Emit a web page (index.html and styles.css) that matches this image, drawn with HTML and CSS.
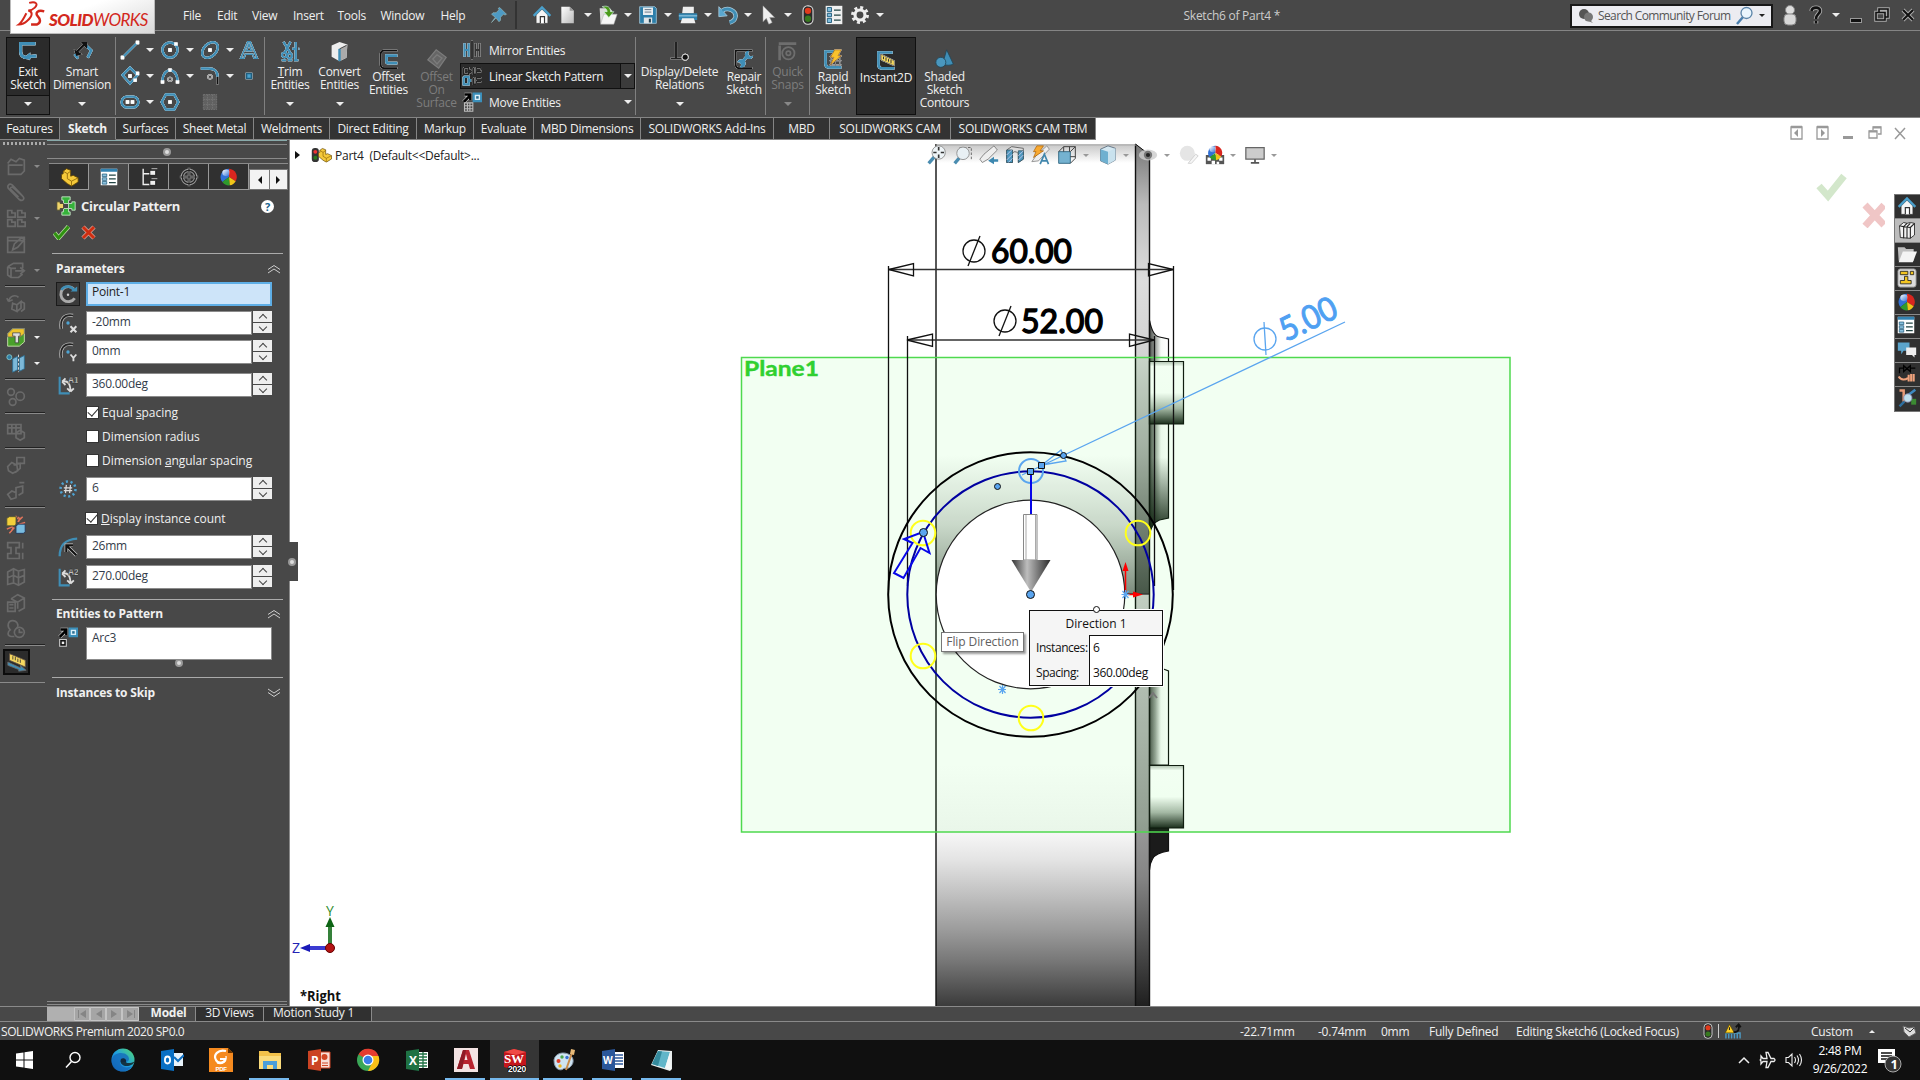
FILE: index.html
```html
<!DOCTYPE html>
<html lang="en">
<head>
<meta charset="utf-8">
<title>SOLIDWORKS Premium 2020 - Sketch6 of Part4</title>
<link rel="stylesheet" href="styles.css">
</head>
<body>
<svg class="defs" aria-hidden="true">
  <defs>
    <linearGradient id="gBall" x1="0" y1="0" x2="1" y2="1"><stop offset="0" stop-color="#fff"/><stop offset="1" stop-color="#fff" stop-opacity="0"/></linearGradient>
    <linearGradient id="gPage" x1="0" y1="0" x2="1" y2="1"><stop offset="0" stop-color="#fff"/><stop offset="1" stop-color="#bbb"/></linearGradient>
    <linearGradient id="gEdge" x1="0" y1="1" x2="1" y2="0"><stop offset="0" stop-color="#0f5fb5"/><stop offset=".5" stop-color="#1f9fe0"/><stop offset="1" stop-color="#55dc6b"/></linearGradient>
    <symbol id="home" viewBox="0 0 24 24"><path d="M5 12v10h14V12l-7-7z" fill="#f4f4f4" stroke="#333" stroke-width=".6"/><path d="M10 22v-8h5v8" fill="#fff" stroke="#333" stroke-width="1.4"/><path d="M2 13L12 3l10 10" fill="none" stroke="#4aa0cc" stroke-width="2.8"/></symbol>
    <symbol id="page" viewBox="0 0 24 24"><path d="M4 2h10l5 5v15H4z" fill="url(#gPage)"/><path d="M14 2l5 5h-5z" fill="#999"/></symbol>
    <symbol id="open" viewBox="0 0 24 24"><path d="M2 4h12l3 3v15H3z" fill="#ddd"/><path d="M7 11h16l-4 12H3z" fill="#f6f6f6" stroke="#aaa" stroke-width=".6"/><path d="M5 2c7-2 10 1 10 6h4l-6 7-6-7h4c0-3-2-4-6-6z" fill="#4c9a1c" stroke="#dfe" stroke-width=".7"/></symbol>
    <symbol id="save" viewBox="0 0 24 24"><path d="M2 2h18l2 2v18H2z" fill="#2d7ea9" stroke="#9fc4d8"/><path d="M6 3h12v9H6z" fill="#e9eef1"/><path d="M8 5.500h8M8 8.500h8" stroke="#567" /><path d="M7 15h10v7H7z" fill="#dfe5e8"/><path d="M13 16.500h2.500V21H13z" fill="#245"/></symbol>
    <symbol id="print" viewBox="0 0 24 24"><path d="M6 2h13v8H5z" fill="#eee"/><path d="M1 10h22v8H1z" fill="#3285b0"/><path d="M1 13h22" stroke="#8fc4de" stroke-width="1.500"/><path d="M5 16h14l2 6H3z" fill="#f1f1f1"/></symbol>
    <symbol id="undo" viewBox="0 0 24 24"><path d="M5 7C12 2 22 7 21 14c-.5 3-3 6-7 7" fill="none" stroke="#a8c8d8" stroke-width="5.500"/><path d="M1 2l10 11-10 1z" fill="#5aa7cf" stroke="#a8c8d8"/><path d="M5 7C12 2 22 7 21 14c-.5 3-3 6-7 7" fill="none" stroke="#3f8eb6" stroke-width="3.600"/></symbol>
    <symbol id="cursor" viewBox="0 0 24 24"><path d="M6 1v19l4-4 3 7 4-2-3-6h6z" fill="#eee" stroke="#999" stroke-width=".6"/></symbol>
    <symbol id="light" viewBox="0 0 24 24"><rect x="6" y="1" width="12" height="22" rx="5.500" fill="#2a2a2a" stroke="#ddd" stroke-width="1.300"/><circle cx="12" cy="7" r="3.800" fill="#e23a1c"/><circle cx="12" cy="16.500" r="3.800" fill="#37791f"/></symbol>
    <symbol id="list" viewBox="0 0 24 24"><path d="M2 1h20v22H2z" fill="#f0f0f0"/><path d="M4 3h5v5H4zM4 10h5v4H4zM4 16h5v5H4z" fill="#7fbddd" stroke="#134f70"/><path d="M12 6h8M12 12h8M12 18h8" stroke="#244" stroke-width="1.500"/></symbol>
    <symbol id="gear" viewBox="0 0 24 24"><circle cx="12" cy="12" r="9" fill="none" stroke="#eee" stroke-width="3.500" stroke-dasharray="3.530 3.530"/><circle cx="12" cy="12" r="6" fill="none" stroke="#eee" stroke-width="3.800"/></symbol>
    <symbol id="pin" viewBox="0 0 24 24"><path d="M13 2l9 9-2 1-2-1-4 4 0 4-2 2-4-5-6 6 5-7-5-4 2-2h4l4-4-1-2z" fill="#4d9ac4" stroke="#9bb" stroke-width=".8"/></symbol>
    <symbol id="proplist" viewBox="0 0 24 24"><path d="M1 1h22v22H1z" fill="#fff"/><path d="M1 1h22v4H1z" fill="#3282b0"/><path d="M3 8h6v3.500H3zM3 13h6v3.500H3zM3 18h6v3.500H3z" fill="#8cc3e0" stroke="#134f70" stroke-width=".9"/><path d="M12 9.500h9M12 14.500h9M12 19.500h9" stroke="#244" stroke-width="1.500"/></symbol>
    <symbol id="ball" viewBox="0 0 24 24"><path d="M12 12V2a10 10 0 0 0-8 16z" fill="#3171d6"/><path d="M12 12V2a10 10 0 0 1 8 15z" fill="#d9261f"/><path d="M12 12L4 18a10 10 0 0 0 9 4z" fill="#2f9a2d"/><path d="M12 12l1 10a10 10 0 0 0 7-5z" fill="#f0c419"/><ellipse cx="8.500" cy="7" rx="4.500" ry="4" fill="url(#gBall)"/></symbol>
    <symbol id="part" viewBox="0 0 24 24"><path d="M5 5l4-3 5 2v7l3-1 6 3v5l-8 5-5-3-7-6V9l2-1z" fill="#f5c93a" stroke="#5c4205" stroke-width="1"/><path d="M5 5l5 3v6l5 3 8-4M10 8l4-3M15 17v6" fill="none" stroke="#8a6408"/></symbol>
    <symbol id="books" viewBox="0 0 24 24"><path d="M3 7l5-4 4 1 4-1 5 1v14l-5 4-12-1z" fill="#f3f3f3" stroke="#222"/><path d="M3 7l5 1v14M8 8l4-4M12 8l4-4M12 8v14M16 9v13M16 9l5-5M8 8l8 1" fill="none" stroke="#222" stroke-width="1.300"/></symbol>
    <symbol id="folder" viewBox="0 0 24 24"><path d="M1 4h8l2 2h9v14H2z" fill="#bfbfbf"/><path d="M7 9h17l-5 13H2z" fill="#f4f4f4"/></symbol>
    <symbol id="box" viewBox="0 0 24 24"><path d="M2 8h14v14H2z" fill="#75b2d0" stroke="#235b78"/><path d="M2 8l6-6h14v14l-6 6M16 8l6-6M8 2v6M15 2v6M16 14h6" fill="none" stroke="#444" stroke-width="1.200"/></symbol>
    <symbol id="plainballs" viewBox="0 0 24 24"><circle cx="10" cy="10" r="9" fill="#e5e5e5"/><path d="M11 22l9-11 3 2-8 9z" fill="#f6f6f6" stroke="#ccc"/></symbol>
    <symbol id="move" viewBox="0 0 24 24"><path d="M2 12l7-7M3 3h7v7" fill="none" stroke="#ccc" stroke-width="4.500"/><path d="M2 12l7-7M3 3h7v7" fill="none" stroke="#000" stroke-width="3"/><path d="M14 2h9v9h-9z" fill="#d9edf7" stroke="#3b8fba" stroke-width="2.600"/><path d="M17 5h3v3h-3z" fill="#2b6f94"/></symbol>
  </defs>
</svg>

<div class="app">
  <header class="titlebar">
    <div class="logo">
      <svg viewBox="0 0 30 34" width="34" height="32"><path d="M12 2c7-2 10 1 6 5-2 2-4 3-7 3 5 1 5 6-1 11-3 3-6 4-9 4 3-2 6-8 8-12" fill="none" stroke="#d3281c" stroke-width="2.100"/><path d="M28 11c-7-2-10 2-7 5 3 3 4 7-1 9h-6" fill="none" stroke="#d3281c" stroke-width="2.600"/></svg>
      <span class="brand"><b>SOLID</b>WORKS</span>
    </div>
    <nav class="menu"><span>File</span><span>Edit</span><span>View</span><span>Insert</span><span>Tools</span><span>Window</span><span>Help</span></nav>
    <svg class="i18 pin"><use href="#pin"/></svg>
    <div class="quick">
      <svg class="i20"><use href="#home"/></svg><svg class="i20"><use href="#page"/></svg><i class="dd"></i><svg class="i20"><use href="#open"/></svg><i class="dd"></i><svg class="i20"><use href="#save"/></svg><i class="dd"></i><svg class="i20"><use href="#print"/></svg><i class="dd"></i><svg class="i20"><use href="#undo"/></svg><i class="dd"></i><svg class="i20"><use href="#cursor"/></svg><i class="dd"></i><svg class="i20"><use href="#light"/></svg><svg class="i20"><use href="#list"/></svg><svg class="i20"><use href="#gear"/></svg><i class="dd"></i>
    </div>
    <div class="doc-title">Sketch6 of Part4 *</div>
    <div class="search">
      <svg width="16" height="16" viewBox="0 0 16 16"><circle cx="6" cy="6" r="5" fill="#555"/><circle cx="10.500" cy="9" r="4.500" fill="#777"/><path d="M12 12l3 3-5-2z" fill="#777"/></svg>
      <span>Search Community Forum</span>
      <svg width="20" height="20" viewBox="0 0 20 20"><path d="M8 11l-6 7" stroke="#4a7fae" stroke-width="2.500"/><circle cx="11.500" cy="7" r="5.500" fill="#eaf5fd" stroke="#5b84a8" stroke-width="1.300"/></svg>
      <i class="dd dark"></i>
    </div>
    <div class="win">
      <svg width="16" height="22" viewBox="0 0 16 22"><circle cx="8" cy="6" r="4.500" fill="#ddd" stroke="#888"/><rect x="2" y="10" width="12" height="11" rx="4" fill="#d8d8d8" stroke="#888"/></svg>
      <svg width="14" height="20" viewBox="0 0 14 20"><path d="M2.500 6C3 1.500 11.500 1.500 11 6c0 3-4 3-4 8M7 16v2.500" fill="none" stroke="#aaa" stroke-width="4.500"/><path d="M2.500 6C3 1.500 11.500 1.500 11 6c0 3-4 3-4 8M7 16v2.500" fill="none" stroke="#111" stroke-width="2.600"/></svg>
      <i class="dd"></i>
      <svg width="14" height="18" viewBox="0 0 14 18"><rect x="1.500" y="12.500" width="11" height="4" fill="#111" stroke="#999"/></svg>
      <svg width="16" height="18" viewBox="0 0 16 18"><path d="M5 6V3h9v8h-3M2 6.500h9V14H2z" fill="none" stroke="#aaa" stroke-width="3.500"/><path d="M5 6V3h9v8h-3M2 6.500h9V14H2z" fill="none" stroke="#111" stroke-width="1.600"/></svg>
      <svg width="14" height="18" viewBox="0 0 14 18"><path d="M2 4l10 10M12 4L2 14" stroke="#aaa" stroke-width="4"/><path d="M2 4l10 10M12 4L2 14" stroke="#111" stroke-width="2"/></svg>
    </div>
  </header>

  <section class="ribbon">
    <div class="cmd pressed exit"><svg class="ri halo" viewBox="0 0 24 24"><path d="M20 3H3v9c0 5 3 7 8 7h3" fill="none" stroke="#3f8eb6" stroke-width="3.500"/><path d="M21 11v8h-7l-1 3-4-5 5-4v3l7-1" fill="#3f8eb6"/></svg><span>Exit<br>Sketch</span><i class="dd bottom"></i></div>
    <div class="cmd smart"><svg class="ri halo" viewBox="0 0 24 24"><path d="M3 15l4 5M14 3l8 8-4 8" fill="none" stroke="#3f8eb6" stroke-width="3"/><path d="M4 14L15 3" stroke="#111" stroke-width="2.800"/><path d="M2 9l3 8 7-2zM10 1h8l-1 8z" fill="#111"/></svg><span>Smart<br>Dimension</span><i class="dd bottom"></i></div>
    <div class="rule"></div>
    <div class="sketchgrid">
      <svg class="gi halo" viewBox="0 0 24 24"><path d="M3 21L21 3" stroke="#3f8eb6" stroke-width="2.600"/><path d="M1 19h4v4H1zM19 1h4v4h-4z" fill="#fff"/></svg><i class="dd"></i>
      <svg class="gi halo" viewBox="0 0 24 24"><circle cx="12" cy="12" r="9" fill="none" stroke="#3f8eb6" stroke-width="2.800"/><path d="M10 10h4v4h-4zM17 3h4v4h-4z" fill="#fff"/></svg><i class="dd"></i>
      <svg class="gi halo" viewBox="0 0 24 24"><ellipse cx="12" cy="12" rx="11" ry="7.500" transform="rotate(-45 12 12)" fill="none" stroke="#3f8eb6" stroke-width="2.800"/><path d="M10 10h4v4h-4z" fill="#fff"/></svg><i class="dd"></i>
      <svg class="gi halo" viewBox="0 0 24 24"><path d="M2 22h4l1.500-5h9L18 22h4L13.500 2h-3zM9 13l3-8 3 8z" fill="none" stroke="#3f8eb6" stroke-width="1.800"/></svg>
      <svg class="gi halo" viewBox="0 0 24 24"><path d="M12 2l9 9-9 10-9-10z" fill="none" stroke="#3f8eb6" stroke-width="2.800"/><path d="M10 10h4v4h-4zM19 7h4v4h-4zM16 15h4v4h-4z" fill="#fff"/></svg><i class="dd"></i>
      <svg class="gi halo" viewBox="0 0 24 24"><path d="M3 18c0-17 18-17 18 0" fill="none" stroke="#3f8eb6" stroke-width="2.800"/><path d="M10 3h4v4h-4zM1 17h4v4H1zM19 17h4v4h-4z" fill="#fff"/><circle cx="12" cy="16" r="2.500" fill="none" stroke="#999" stroke-width="1.500"/></svg><i class="dd"></i>
      <svg class="gi halo" viewBox="0 0 24 24"><path d="M1 3h9c8 0 11 3 11 10" fill="none" stroke="#3f8eb6" stroke-width="2.800"/><path d="M21 13v9" stroke="#111" stroke-width="2.400"/><circle cx="12" cy="13" r="2.500" fill="none" stroke="#999" stroke-width="1.500"/></svg><i class="dd"></i>
      <svg class="gi halo" viewBox="0 0 24 24"><path d="M9 9h6v6H9z" fill="#4aa3d0" stroke="#1f5f80" stroke-width="2"/></svg>
      <svg class="gi halo" viewBox="0 0 24 24"><rect x="2" y="5.500" width="20" height="13" rx="6.500" fill="none" stroke="#3f8eb6" stroke-width="2.800"/><path d="M7 10h4v4H7zM13 10h4v4h-4z" fill="#fff"/></svg><i class="dd"></i>
      <svg class="gi halo" viewBox="0 0 24 24"><path d="M7 3h10l5 9-5 9H7l-5-9z" fill="none" stroke="#3f8eb6" stroke-width="2.800"/><path d="M10 10h4v4h-4z" fill="#fff"/></svg><i></i>
      <svg class="gi faint" viewBox="0 0 24 24"><path d="M4 3h16v18H4zM4 9h16M4 15h16M9 3v18M15 3v18" fill="#777" stroke="#999" stroke-dasharray="2 1"/></svg><i></i><i></i>
    </div>
    <div class="rule"></div>
    <div class="cmd trim"><svg class="ri halo" viewBox="0 0 24 24"><path d="M4 1l8 13M12 1L5 14M18 1v21" stroke="#3f8eb6" stroke-width="2.600"/><circle cx="5" cy="16" r="2.700" fill="none" stroke="#3f8eb6" stroke-width="2.200"/><circle cx="11" cy="17" r="2.700" fill="none" stroke="#3f8eb6" stroke-width="2.200"/><path d="M2 22h20M14 9h8" stroke="#3f8eb6" stroke-width="2.400" stroke-dasharray="5 2"/></svg><span><u>T</u>rim<br>Entities</span><i class="dd bottom"></i></div>
    <div class="cmd conv"><svg class="ri" viewBox="0 0 24 24"><path d="M3 5l9-4 9 3-1 15-8 4-9-5z" fill="#eee"/><path d="M12 9l9-5-1 15-8 4z" fill="#aaa"/><path d="M12 9v14" stroke="#3f8eb6" stroke-width="2.800"/><path d="M12 9l8-4" stroke="#333"/></svg><span>Convert<br>Entities</span><i class="dd bottom"></i></div>
    <div class="cmd low off"><svg class="ri halo" viewBox="0 0 24 24"><path d="M22 2H6Q2 2 2 6v12q0 5 4 5h16" fill="none" stroke="#111" stroke-width="2.200"/><path d="M22 8H9v7q0 2 2 2h11" fill="none" stroke="#3f8eb6" stroke-width="3.200"/></svg><span>Offset<br>Entities</span></div>
    <div class="cmd low surf disabled"><svg class="ri" viewBox="0 0 24 24"><path d="M1 13L11 1l12 9-9 13zM7 12l5-5 6 4-6 7z" fill="#666" stroke="#7c7c7c" stroke-width="1.500"/></svg><span>Offset<br>On<br>Surface</span></div>
    <div class="stack">
      <div class="row"><svg class="gi halo" viewBox="0 0 24 24"><path d="M12 1v22" stroke="#111" stroke-width="2"/><path d="M3 4v16M3 12h5M8 4v16" fill="none" stroke="#3f8eb6" stroke-width="2.600"/><path d="M21 4v16M16 12h5M16 4v16" fill="none" stroke="#333" stroke-width="2.400"/></svg><span>Mirror Entities</span></div>
      <div class="row sel"><svg class="gi halo" viewBox="0 0 24 24"><g fill="none" stroke="#222" stroke-width="1.800"><path d="M2 2h6v3h3M2 2v8h6V8h3M14 2v8h3V7h6M17 6V2h6v3M14 14v8h3v-3h6M17 17v-3h6"/><path d="M2 13v9h6v-4h3M2 13h6v4h3" stroke="#3f8eb6" stroke-width="2.600"/></g></svg><span>Linear Sketch Pattern</span><em><i class="dd"></i></em></div>
      <div class="row"><svg class="gi" viewBox="0 0 24 24"><use href="#move"/><path d="M3 13h10v10H3zM6.500 13v10M9.500 13v10M3 16.500h10M3 20h10" fill="none" stroke="#bbb" stroke-width="1.300"/></svg><span>Move Entities</span><em><i class="dd"></i></em></div>
    </div>
    <div class="rule"></div>
    <div class="cmd disp"><svg class="ri halo" viewBox="0 0 24 24"><path d="M8 1v18M2 20h12" stroke="#222" stroke-width="2.400"/><circle cx="18.500" cy="18.500" r="3.500" fill="#111" stroke="#ddd"/></svg><span>Display/Delete<br>Relations</span><i class="dd bottom"></i></div>
    <div class="cmd low rep"><svg class="ri halo" viewBox="0 0 24 24"><path d="M22 2H2v16q0 5 4 5h16" fill="none" stroke="#111" stroke-width="2.200"/><path d="M8 18l9-11" stroke="#3f8eb6" stroke-width="3.500"/><path d="M18 2a5 5 0 1 0 5 6l-4 1-2-3z" fill="#3f8eb6"/><path d="M7 22a5 5 0 1 0-3-6l4 0 1 3z" fill="#3f8eb6"/></svg><span>Repair<br>Sketch</span></div>
    <div class="rule"></div>
    <div class="cmd snap disabled"><svg class="ri" viewBox="0 0 24 24"><path d="M2 3h20M3 5v17" stroke="#6e6e6e" stroke-width="3"/><circle cx="13" cy="14" r="7" fill="none" stroke="#6e6e6e" stroke-width="2"/><circle cx="13" cy="14" r="2.500" fill="none" stroke="#6e6e6e" stroke-width="2"/></svg><span>Quick<br>Snaps</span><i class="dd bottom"></i></div>
    <div class="rule"></div>
    <div class="cmd low rapid"><svg class="ri halo" viewBox="0 0 24 24"><path d="M20 3H3v14q0 5 5 5h14" fill="none" stroke="#3f8eb6" stroke-width="3.200"/><path d="M8 9h14M8 14h14M8 19h14M10 7v14M15 7v14M20 7v14" stroke="#777"/><path d="M14 1h8l-4 7h4L9 19l4-9H9z" fill="#f9c22d" stroke="#8a4b00" stroke-width=".6"/></svg><span>Rapid<br>Sketch</span></div>
    <div class="cmd low pressed inst"><svg class="ri halo" viewBox="0 0 24 24"><path d="M20 3H3v14q0 5 5 5h14" fill="none" stroke="#3f8eb6" stroke-width="3.200"/><path d="M6 5l16 8v6L6 12z" fill="#f5d860" stroke="#444" stroke-width=".7"/><path d="M9 8v3M12 9v4M15 11v3M18 12v4" stroke="#333" stroke-width="1.200"/></svg><span>Instant2D</span></div>
    <div class="cmd low shade"><svg class="ri" viewBox="0 0 24 24"><path d="M14 1l8 17c-3 2-9 2-13 0z" fill="#3f8eb6" stroke="#245"/><circle cx="7" cy="16" r="6" fill="#4a97be" stroke="#245"/></svg><span>Shaded<br>Sketch<br>Contours</span></div>
  </section>

  <div class="tabrow">
    <div class="tabs"><span class="t1">Features</span><span class="t2 on">Sketch</span><span class="t3">Surfaces</span><span class="t4">Sheet Metal</span><span class="t5">Weldments</span><span class="t6">Direct Editing</span><span class="t7">Markup</span><span class="t8">Evaluate</span><span class="t9">MBD Dimensions</span><span class="t10">SOLIDWORKS Add-Ins</span><span class="t11">MBD</span><span class="t12">SOLIDWORKS CAM</span><span class="t13">SOLIDWORKS CAM TBM</span></div>
    <svg class="docbtns" width="118" height="16" viewBox="0 0 118 16"><g fill="none" stroke="#999" stroke-width="1.300"><path d="M1 2h11v12H1zM27 2h11v12H27z"/><path d="M1 2h11M27 2h11" stroke-width="2.500"/><path d="M83 5V2h8v7h-3M79 6h8v7h-8z"/><path d="M79 6.500h8M83 2.500h8" stroke-width="2"/><path d="M105 3l10 11M115 3l-10 11" stroke-width="1.500"/></g><path d="M8 4v8L4 8zM31 4v8l4-4zM53 11h10v3H53z" fill="#999"/></svg>
  </div>

  <main class="work">
    <aside class="sidetools">
      <div class="grip"></div>
      <div class="tool"><svg viewBox="0 0 24 24"><path d="M2 9l4-5 6 3 4-4 6 2v13l-4 4H3V11h17" /></svg><i class="dd"></i></div>
      <div class="tool"><svg viewBox="0 0 24 24"><path d="M20 17L8 4C4 0 0 5 4 9l12 12c4 3 7-1 4-4L9 7C7 5 4 7 6 9l9 9"/></svg></div>
      <div class="tool"><svg viewBox="0 0 24 24"><path d="M2 3h5v3h4v5H2zM14 3h5v3h4v5h-9zM2 14h5v3h4v5H2zM14 14h5v3h4v5h-9z"/></svg><i class="dd"></i></div>
      <div class="tool"><svg viewBox="0 0 24 24"><path d="M2 4h20v18H2zM2 8h20M8 19l2-7 9-8 3 3-8 9z"/></svg></div>
      <div class="tool"><svg viewBox="0 0 24 24"><path d="M2 8l7-4h11v6M2 8v10l4 3h9l5-4M6 10v11M2 8l4 2h6M11 13h10M17 9l5 4-5 4"/></svg><i class="dd"></i></div>
      <hr>
      <div class="tool"><svg viewBox="0 0 24 24"><path d="M3 9c2-8 9-8 12-5M3 9L1 5M3 9l5-2M8 11l5 2v8l-6-3zM13 13l5-4v8l-5 4M18 9l4 2v7l-4 3"/></svg></div>
      <hr>
      <div class="tool col"><svg viewBox="0 0 24 24"><path d="M2 8l6-6h14v16l-6 5H2z" fill="#49a02a" stroke="#d6e9b9"/><path d="M2 8l6-6h14v6l-5 4H2z" fill="#eec52c"/><path d="M8 7h9v4h-2v8h-4v-8H8z" fill="#ddd" stroke="#333" stroke-width=".8"/></svg><i class="dd"></i></div>
      <div class="tool col"><svg viewBox="0 0 24 24"><circle cx="4" cy="5" r="3" fill="#2f7ea7" stroke="#8cc"/><path d="M8 7l6-3v16l-6 3zM16 6l6-3v16l-6 3z" fill="#7cb8d8" stroke="#2b6e92"/><path d="M15 2v21" stroke="#eee" stroke-dasharray="3 2"/></svg><i class="dd"></i></div>
      <hr>
      <div class="tool"><svg viewBox="0 0 24 24"><circle cx="6" cy="6" r="4"/><circle cx="17" cy="11" r="5"/><circle cx="8" cy="18" r="4"/></svg></div>
      <hr class="h2">
      <div class="tool"><svg viewBox="0 0 24 24"><path d="M2 3h16v11H2zM2 7h16M7 3v11M12 3v11M12 13l5-3 5 3v6l-5 3-5-3z"/></svg></div>
      <hr>
      <div class="tool"><svg viewBox="0 0 24 24"><path d="M13 3h9v7h-9zM2 14l5-5 6 3 1 7-6 3-5-3zM9 12l8-2v6l-6 5"/></svg></div>
      <div class="tool"><svg viewBox="0 0 24 24"><path d="M2 16l5-4 5 2v6l-6 2zM12 14V8l8-2v8l-5 3M16 2h6"/></svg></div>
      <hr>
      <div class="tool col"><svg viewBox="0 0 24 24"><path d="M14 8l6-6M16 11l7-2M10 15l-6 7M8 14l-7 3M12 3V1M14 5l1-3M17 3l-2 5M6 20l3-5" stroke="#e0755c" stroke-width="1.800"/><path d="M1 4l3-2h8v9l-2 2H1z" fill="#f3cf3a" stroke="#553"/><path d="M12 13l3-2h8v9l-2 2h-9z" fill="#79bce0" stroke="#235"/></svg></div>
      <div class="tool"><svg viewBox="0 0 24 24"><path d="M2 2h14v6h-4v7h4v6H2v-6h4V8H2zM20 2v7M20 14v8"/></svg></div>
      <div class="tool"><svg viewBox="0 0 24 24"><path d="M2 6l7-4 6 3 7-2v15l-7 4-6-3-7 2zM9 2v17M15 5v17M2 13l7-3 6 3 7-3"/></svg></div>
      <div class="tool"><svg viewBox="0 0 24 24"><path d="M6 7l8-5 8 4v12l-7 4M6 7l8 4v8M14 11l8-5M2 11h9v11H2zM4 14h5M4 18h5"/></svg></div>
      <div class="tool"><svg viewBox="0 0 24 24"><path d="M10 21H6C1 20 2 15 5 13 1 9 2 2 8 2c5 0 8 5 5 9"/><circle cx="16" cy="16" r="6"/><path d="M16 12v4h4"/></svg></div>
      <hr>
      <div class="tool col active"><svg viewBox="0 0 24 24"><path d="M3 2l19 8v8L3 10z" fill="#f5d860" stroke="#654"/><path d="M7 5v4M10 6v4M13 8v4M16 9v4" stroke="#333"/><path d="M1 12l15 7v-3l7 6-9 1v-2L1 16z" fill="#3f8eb6"/></svg></div>
      <hr class="full">
    </aside>

    <aside class="pm">
      <div class="pm-top"><b class="dot"></b></div>
      <div class="pm-tabs">
        <div><svg class="i20"><use href="#part"/></svg></div>
        <div class="on"><svg class="i18"><use href="#proplist"/></svg></div>
        <div><svg class="i20" viewBox="0 0 24 24"><path d="M5 2v19h8M5 8h8" fill="none" stroke="#eee" stroke-width="1.700"/><path d="M13 4h7v6h-7zM13 16h7v6h-7z" fill="#eee" stroke="#111"/><path d="M15 2h7M15 14h7" stroke="#ccc"/></svg></div>
        <div><svg class="i20" viewBox="0 0 24 24"><circle cx="12" cy="12" r="8" fill="none" stroke="#999" stroke-width="4"/><path d="M12 1v22M1 12h22" stroke="#aaa" stroke-width="3"/><circle cx="12" cy="12" r="8" fill="none" stroke="#222" stroke-width="1.500"/><path d="M12 1v22M1 12h22" stroke="#222" stroke-width="1.300"/></svg></div>
        <div><svg class="i20"><use href="#ball"/></svg></div>
        <div class="scroll"><i class="lt"></i><i class="rt"></i></div>
      </div>
      <div class="pm-title">
        <svg class="i20" viewBox="0 0 24 24"><path d="M7 1h10v4h-2v4H9V5H7zM7 23h10v-4h-2v-4H9v4H7zM23 7v10h-4v-2h-4V9h4V7z" fill="#35b23a" stroke="#cfe8cf"/><path d="M1 7v10h4v-2h4V9H5V7z" fill="#f0d56a" stroke="#443"/></svg>
        <strong>Circular Pattern</strong><b class="help">?</b>
      </div>
      <div class="pm-ok">
        <svg width="17" height="15" viewBox="0 0 17 15"><path d="M1.500 8l4 5L15.500 1.500" fill="none" stroke="#b9d8a5" stroke-width="4.500"/><path d="M1.500 8l4 5L15.500 1.500" fill="none" stroke="#2f9310" stroke-width="3"/></svg>
        <svg width="15" height="15" viewBox="0 0 15 15"><path d="M2 2l11 11M13 2L2 13" stroke="#d9a399" stroke-width="4.500"/><path d="M2 2l11 11M13 2L2 13" stroke="#cf2d10" stroke-width="3"/></svg>
      </div>
      <section class="grp">
        <h3>Parameters<svg width="14" height="10" viewBox="0 0 14 10"><path d="M1 5.500l6-4 6 4M1 9l6-4 6 4" fill="none" stroke="#ccc"/></svg></h3>
        <div class="f f1"><span class="lb boxed"><svg class="i20" viewBox="0 0 24 24"><path d="M19 6A9 9 0 1 0 20 17" fill="none" stroke="#aaa" stroke-width="3.500"/><path d="M4 7a9 9 0 0 1 15 0" fill="none" stroke="#3f8eb6" stroke-width="3"/><path d="M15 9h8V3z" fill="#3f8eb6"/><circle cx="12" cy="13" r="1.500" fill="#ccc"/></svg></span><div class="in hot">Point-1</div></div>
        <div class="f f2"><span class="lb"><svg class="i20" viewBox="0 0 24 24"><path d="M18 3C7 1 2 8 4 19" fill="none" stroke="#bbb" stroke-width="4"/><path d="M18 3C7 1 2 8 4 19" fill="none" stroke="#222" stroke-width="2"/><circle cx="12" cy="12" r="2" fill="#4da3d3"/><path d="M15 16l7 7M22 16l-7 7" stroke="#ddd" stroke-width="2.500"/></svg></span><div class="in">-20mm</div><div class="sp"><i></i><i></i></div></div>
        <div class="f f3"><span class="lb"><svg class="i20" viewBox="0 0 24 24"><path d="M18 3C7 1 2 8 4 19" fill="none" stroke="#bbb" stroke-width="4"/><path d="M18 3C7 1 2 8 4 19" fill="none" stroke="#222" stroke-width="2"/><circle cx="12" cy="12" r="2" fill="#4da3d3"/><path d="M15 15l3.500 4 3.500-4M18.500 19v4" fill="none" stroke="#ddd" stroke-width="2.200"/></svg></span><div class="in">0mm</div><div class="sp"><i></i><i></i></div></div>
        <div class="f f4"><span class="lb"><svg class="i20" viewBox="0 0 24 24"><path d="M2 2v20h12" fill="none" stroke="#3f8eb6" stroke-width="2.500"/><path d="M5 8c7-2 10 3 10 12M5 8l4-4M5 8l4 4M15 20l-4-4M15 20l4-4" fill="none" stroke="#ddd" stroke-width="2.200"/><text x="12" y="10" class="mini">A1</text></svg></span><div class="in">360.00deg</div><div class="sp"><i></i><i></i></div></div>
        <label class="ck c1"><i class="y"></i><span>Equal <u>s</u>pacing</span></label>
        <label class="ck c2"><i></i><span>Dimension radius</span></label>
        <label class="ck c3"><i></i><span>Dimension <u>a</u>ngular spacing</span></label>
        <div class="f f5"><span class="lb"><svg class="i20" viewBox="0 0 24 24"><circle cx="12" cy="12" r="9" fill="none" stroke="#4da3d3" stroke-width="3" stroke-dasharray="2.500 3.150"/><path d="M10 7l-1 10M15 7l-1 10M7 10.500h10M7 14h10" stroke="#ddd" stroke-width="1.500"/></svg></span><div class="in">6</div><div class="sp"><i></i><i></i></div></div>
        <label class="ck c4"><i class="y"></i><span><u>D</u>isplay instance count</span></label>
        <div class="f f6"><span class="lb"><svg class="i20" viewBox="0 0 24 24"><path d="M2 23C2 10 8 3 23 2" fill="none" stroke="#3f8eb6" stroke-width="2.800"/><path d="M22 22L11 11M10 18v-8h8" fill="none" stroke="#ccc" stroke-width="4.200"/><path d="M22 22L11 11M10 18v-8h8" fill="none" stroke="#111" stroke-width="2.600"/></svg></span><div class="in">26mm</div><div class="sp"><i></i><i></i></div></div>
        <div class="f f7"><span class="lb"><svg class="i20" viewBox="0 0 24 24"><path d="M2 2v20h12" fill="none" stroke="#3f8eb6" stroke-width="2.500"/><path d="M5 8c7-2 10 3 10 12M5 8l4-4M5 8l4 4M15 20l-4-4M15 20l4-4" fill="none" stroke="#ddd" stroke-width="2.200"/><text x="12" y="10" class="mini">A2</text></svg></span><div class="in">270.00deg</div><div class="sp"><i></i><i></i></div></div>
      </section>
      <section class="grp g2">
        <h3>Entities to Pattern<svg width="14" height="10" viewBox="0 0 14 10"><path d="M1 5.500l6-4 6 4M1 9l6-4 6 4" fill="none" stroke="#ccc"/></svg></h3>
        <div class="f f8"><span class="lb"><svg class="i20" viewBox="0 0 24 24"><use href="#move"/><path d="M2 15h8v8H2z" fill="#111" stroke="#ccc" stroke-width="1.300"/><path d="M4.500 17.500h3v3h-3z" fill="#eee"/></svg></span><div class="in tall">Arc3</div></div>
        <b class="dot d2"></b>
      </section>
      <section class="grp g3">
        <h3>Instances to Skip<svg width="14" height="10" viewBox="0 0 14 10"><path d="M1 1l6 4 6-4M1 4.500l6 4 6-4" fill="none" stroke="#ccc"/></svg></h3>
      </section>
      <div class="pm-end"></div>
    </aside>

    <section class="view">
      <svg class="scene" width="1630" height="866" viewBox="290 140 1630 866">
        <defs>
          <linearGradient id="body" gradientUnits="userSpaceOnUse" x1="0" y1="144" x2="0" y2="1006"><stop offset="0" stop-color="#c6c6c6"/><stop offset=".022" stop-color="#fff"/><stop offset=".72" stop-color="#fff"/><stop offset=".8" stop-color="#f6f6f6"/><stop offset=".83" stop-color="#e4e4e4"/><stop offset=".869" stop-color="#c2c2c2"/><stop offset=".91" stop-color="#9d9d9d"/><stop offset=".947" stop-color="#787878"/><stop offset="1" stop-color="#3b3b3b"/></linearGradient>
          <linearGradient id="bore" x1="0" y1="0" x2="0" y2="1"><stop offset="0" stop-color="#9a9f9a" stop-opacity="0"/><stop offset=".5" stop-color="#8f958f" stop-opacity=".38"/><stop offset="1" stop-color="#6c706d" stop-opacity=".85"/></linearGradient>
          <linearGradient id="strip" gradientUnits="userSpaceOnUse" x1="0" y1="144" x2="0" y2="1006"><stop offset="0" stop-color="#777"/><stop offset=".07" stop-color="#bbb"/><stop offset=".16" stop-color="#ddd"/><stop offset=".25" stop-color="#d2d2d2"/><stop offset=".36" stop-color="#a8aaa8"/><stop offset=".45" stop-color="#747674"/><stop offset=".521" stop-color="#4d504e"/><stop offset=".523" stop-color="#ccc"/><stop offset=".64" stop-color="#b9b9b9"/><stop offset=".78" stop-color="#9d9d9d"/><stop offset=".85" stop-color="#858585"/><stop offset=".92" stop-color="#555"/><stop offset="1" stop-color="#1f1f1f"/></linearGradient>
          <linearGradient id="boss" x1="0" y1="0" x2="0" y2="1"><stop offset="0" stop-color="#b9bfb9"/><stop offset=".08" stop-color="#fff"/><stop offset=".5" stop-color="#fdfffd"/><stop offset=".75" stop-color="#aeb6ae"/><stop offset="1" stop-color="#1d241e"/></linearGradient>
          <linearGradient id="side" x1="0" y1="0" x2="1" y2="0"><stop offset="0" stop-color="#4e524e"/><stop offset=".3" stop-color="#9a9f9a"/><stop offset=".6" stop-color="#f6f9f6"/><stop offset="1" stop-color="#fff"/></linearGradient>
          <linearGradient id="fade" x1="0" y1="0" x2="0" y2="1"><stop offset=".3" stop-color="#121a13" stop-opacity="0"/><stop offset="1" stop-color="#121a13"/></linearGradient>
          <linearGradient id="cone" x1="0" y1="0" x2="1" y2="0"><stop offset="0" stop-color="#333"/><stop offset=".4" stop-color="#bdbdbd"/><stop offset="1" stop-color="#2b2b2b"/></linearGradient>
        </defs>
        <path d="M936 144h200v862H936z" fill="url(#body)"/>
        <path d="M936 455h200v139H936z" fill="url(#bore)"/>
        <path d="M1135.500 144l14 10v852h-14z" fill="url(#strip)"/>
        <g stroke="#111" stroke-width="1.200">
          <path d="M1149.500 320q3 16 10 17l9 2v179l-9 2q-8 3-10 15z" fill="url(#side)"/>
          <path d="M1149.500 424h19v94l-9 2q-8 3-10 15z" fill="url(#fade)" stroke="none"/>
          <path d="M1149.500 361.500h34v62.500h-34z" fill="url(#boss)"/>
          <path d="M1149.500 668l14 1 5 2v94h-19z" fill="url(#side)"/>
          <path d="M1149.500 828h19v23q-13 2-16 8-3 5-3 11z" fill="#1b1b1b"/>
          <path d="M1149.500 765.500h34v62.500h-34z" fill="url(#boss)"/>
        </g>
        <path d="M936 144v862M1135.500 144v862M1149.500 154v852" stroke="#111" stroke-width="1.400"/>
        <path d="M936 145h200" stroke="#aaa"/>
        <path d="M1135.500 144l14 11" stroke="#111"/>
        <path d="M741.500 357.500h768.500v474.500H741.500z" fill="#00ff00" fill-opacity=".05"/>
        <circle cx="1030.500" cy="594.500" r="94.300" fill="#fff" stroke="#222" stroke-width="1.200"/>
        <path d="M741.500 357.500h768.500v474.500H741.500z" fill="none" stroke="#4fd94f" stroke-width="1.500"/>
        <text x="744" y="376" class="plane" textLength="75" lengthAdjust="spacingAndGlyphs">Plane1</text>
        <g fill="none" stroke="#111" stroke-width="1.300">
          <path d="M888.500 266v324M1173.500 266v324M907.500 336v250M1154.500 336v250"/>
          <path d="M889 269.500h284M907 340h247" stroke="#333"/>
          <path d="M889 269.500l24.500-6v12.500zM1173 269.500l-24.500-6v12.500zM907 340l25.500-6v12.500zM1154 340l-24.500-6v12.500z"/>
          <circle cx="974" cy="251" r="11"/><path d="M968 266l12-30"/>
          <circle cx="1005" cy="321" r="11"/><path d="M999 336l12-30"/>
        </g>
        <text x="991" y="263" class="dim" textLength="81" lengthAdjust="spacingAndGlyphs">60.00</text>
        <text x="1021" y="333" class="dim" textLength="82" lengthAdjust="spacingAndGlyphs">52.00</text>
        <g fill="none" stroke="#5aa5ef" stroke-width="1.300">
          <path d="M1345 322L1022 475M1042 465l19-15 5 11z"/><circle cx="1265" cy="339" r="11"/><path d="M1264 322l2 33"/>
        </g>
        <text transform="translate(1286 342) rotate(-25.500)" class="dim sel" textLength="60" lengthAdjust="spacingAndGlyphs">5.00</text>
        <g fill="none" stroke-width="2">
          <circle cx="1030.500" cy="594.500" r="142.300" stroke="#000"/>
          <circle cx="1030.500" cy="594.500" r="123.200" stroke="#0000a0"/>
          <g stroke="#ffff1a"><circle cx="923" cy="533" r="12.300"/><circle cx="1138" cy="533" r="12.300"/><circle cx="923" cy="656" r="12.300"/><circle cx="1031" cy="718" r="12.300"/><circle cx="1138" cy="656" r="12.300"/></g>
          <circle cx="1031" cy="471" r="12" stroke="#5aa5ef"/>
          <path d="M1031 471v43M923 532l-19 7 8.500 4-18.500 30 9.500 5 17-30 9 5z" stroke="#0707e8"/>
        </g>
        <path d="M1023.500 514.500h13.500V560h-13.500z" fill="#fff" stroke="#888"/><path d="M1026 515v45M1035.500 515v45" stroke="#aaa"/>
        <path d="M1011.500 560h39L1031 592z" fill="url(#cone)"/>
        <g fill="#5aa5ef" stroke="#111"><circle cx="1030.500" cy="594.500" r="4"/><circle cx="923.500" cy="532.500" r="4"/><circle cx="1063.500" cy="455.500" r="3"/><circle cx="997.500" cy="486.500" r="3"/><path d="M1038.500 462.500h6v6h-6zM1027.500 468.500h6v6h-6z"/></g>
        <path d="M1126 594h23" stroke="#111"/><path d="M1125.500 594v-24M1128 594.500h6" stroke="#f00" stroke-width="1.500"/><path d="M1125.500 562l-3 9h6zM1143 594.500l-10-3v6z" fill="#f00"/>
        <path d="M1121.500 594.500h8M1125.500 590v9M1122.500 591l6 7M1128.500 591l-6 7M998 689.500h8M1002.500 685v9M999.500 686l6 7M1005.500 686l-6 7" stroke="#5aa5ef" stroke-width="1.200"/>
        <path d="M1149 698l4-5 4 5" fill="none" stroke="#777" stroke-width="2"/>
        <g class="triad"><path d="M330 945v-20" stroke="#35813a" stroke-width="4"/><path d="M330 917l-4.500 10h9z" fill="#0d6414"/><path d="M328 948h-20" stroke="#3b3bd2" stroke-width="4"/><path d="M300 948l10-4v8z" fill="#1a1ab8"/><circle cx="330" cy="948" r="4.500" fill="#b41414" stroke="#600"/><text x="326" y="916" fill="#2d8c2d">Y</text><text x="292" y="953" fill="#2323b5">Z</text></g>
        <text x="300" y="1001" class="orient" textLength="41" lengthAdjust="spacingAndGlyphs">*Right</text>
      </svg>
      <div class="hud">
        <svg class="i20" viewBox="0 0 24 24"><path d="M9 14l-7 8" stroke="#4a8cb0" stroke-width="4"/><circle cx="14" cy="9" r="8" fill="#eef4f7" stroke="#888"/><path d="M14 2.500v4M14 11.500v4M7.500 9h4M16.500 9h4" stroke="#333" stroke-width="2"/></svg>
        <svg class="i20" viewBox="0 0 24 24"><path d="M8 3h14v14" fill="none" stroke="#555" stroke-dasharray="3 2"/><path d="M8 15l-6 7" stroke="#4a8cb0" stroke-width="4"/><circle cx="12" cy="10" r="7.500" fill="#e9f0f4" stroke="#888"/></svg>
        <svg class="i20" viewBox="0 0 24 24"><path d="M1 17l5-6L18 1l4 5-11 11-7 4z" fill="#eee" stroke="#777"/><path d="M23 17h-5v-3l-7 5 7 4v-3h5z" fill="#3d88b0"/></svg>
        <svg class="i20" viewBox="0 0 24 24"><path d="M2 6l6-4 14 2v13l-6 4V10q-5-4-7 0v11H2z" fill="#ddd" stroke="#555"/><path d="M2 6h7v15H2zM16 7h6v10l-6 4z" fill="#4d98bf" stroke="#356"/><path d="M2 12l6-6M2 18l7-7M4 21l5-5M16 13l6-6M16 18l6-6" stroke="#cce"/></svg>
        <svg class="i20" viewBox="0 0 24 24"><path d="M1 20l5-7L19 1l3 4L9 19z" fill="#eee" stroke="#888"/><path d="M7 1h8l-4 6h4L3 15l3-7H3z" fill="#f8a930" stroke="#a65a00" stroke-width=".8"/><path d="M11 23l5-12 5 12M13 19h6" fill="none" stroke="#4187ad" stroke-width="2"/></svg>
        <svg class="i20"><use href="#box"/></svg><i class="dd g"></i>
        <svg class="i20" viewBox="0 0 24 24"><path d="M3 5l9-4 9 3v14l-9 5-9-4z" fill="#d4e8f2" stroke="#567"/><path d="M3 5l9 3v15l-9-4z" fill="#6fb0d0"/><path d="M12 8l9-4v14l-9 5z" fill="#c9e2ee"/></svg><i class="dd g"></i>
        <svg class="i20" viewBox="0 0 24 24"><ellipse cx="12" cy="12" rx="11" ry="6.500" fill="#ccc" fill-opacity=".8"/><circle cx="12" cy="12" r="5" fill="#777"/><circle cx="12" cy="12" r="2.500" fill="#222"/></svg><i class="dd g"></i>
        <svg class="i20"><use href="#plainballs"/></svg>
        <svg class="i20" viewBox="0 0 24 24"><path d="M1 12h22v11H1z" fill="#555"/><path d="M3 15h4v4H3zM17 15h4v4h-4zM8 19h4v4H8zM14 20h3v3h-3z" fill="#fff"/><svg x="2" y="-1" width="21" height="21"><use href="#ball"/></svg></svg><i class="dd g"></i>
        <svg class="i20" viewBox="0 0 24 24"><path d="M1 3h22v14H1z" fill="#ccc" stroke="#666" stroke-width="1.500"/><path d="M12 17v4M7 21.500h10" stroke="#555" stroke-width="2"/></svg><i class="dd g"></i>
      </div>
      <div class="tree"><i></i><svg width="22" height="20" viewBox="0 0 28 24"><rect x="1" y="3" width="9" height="18" rx="4" fill="#333"/><circle cx="5.500" cy="8" r="2.500" fill="#e33"/><circle cx="5.500" cy="15.500" r="2.500" fill="#2a7a1a"/><svg x="7" y="2" width="20" height="20"><use href="#part"/></svg></svg><span>Part4&nbsp; (Default&lt;&lt;Default&gt;...</span></div>
      <svg class="confirm" width="70" height="56" viewBox="0 0 70 56"><path d="M4 14l9 10L29 4" fill="none" stroke="#d3e7cb" stroke-width="7"/><path d="M50 33l19 20M69 33L50 54" stroke="#f0c6c6" stroke-width="7"/></svg>
      <div class="tip">Flip Direction</div>
      <div class="callout"><b></b><h4>Direction 1</h4><div class="cl"><span>Instances:</span><span>Spacing:</span></div><div class="cr"><span>6</span><span>360.00deg</span></div></div>
      <div class="handle"><b class="dot"></b></div>
      <div class="taskpane">
        <div><svg class="i20"><use href="#home"/></svg></div><div class="on"><svg class="i20"><use href="#books"/></svg></div><div><svg class="i20"><use href="#folder"/></svg></div>
        <div><svg class="i20" viewBox="0 0 24 24"><rect x="1" y="1" width="22" height="22" rx="3" fill="#ddd" stroke="#777"/><path d="M4 4h9v4H4zM16 4h4v4h-4zM9 10h4v5h4v4H4v-4h5z" fill="#f3c522" stroke="#222"/></svg></div>
        <div><svg class="i20"><use href="#ball"/></svg></div><div><svg class="i18"><use href="#proplist"/></svg></div>
        <div><svg class="i20" viewBox="0 0 24 24"><path d="M1 3h14v10H8l-3 4v-4H1z" fill="#5ba4cb"/><path d="M11 9h12v9h-2v3l-3-3h-7z" fill="#eee"/></svg></div>
        <div><svg class="i20" viewBox="0 0 24 24"><path d="M3 11V5h5M8 2v7l8-7v7zM16 5h6" fill="none" stroke="#000" stroke-width="1.500"/><path d="M2 15c3 5 8 4 11 2M14 13v8M17 12v9M20 12v9" fill="none" stroke="#f0a27c" stroke-width="2.500"/></svg></div>
        <div><svg class="i20" viewBox="0 0 24 24"><path d="M3 3h5v12h4" fill="none" stroke="#e89b78" stroke-width="3"/><path d="M14 8l8-6" stroke="#3d88c0" stroke-width="3"/><path d="M17 13h6v7h-6z" fill="#3b8a32"/><path d="M9 16l-6 6" stroke="#2e6e9e" stroke-width="3"/><circle cx="13" cy="12" r="5" fill="#bfe0ef" stroke="#88a"/></svg></div>
      </div>
    </section>
  </main>

  <div class="modelrow"><div class="grey"></div><svg class="nav" width="65" height="14" viewBox="0 0 65 14"><path d="M0 0h65v14H0z" fill="#a5a5a5"/><path d="M.5.5h15v13H.500zM16.500.5h15v13h-15zM32.500.5h15v13h-15zM48.500.5h16v13h-16z" fill="none" stroke="#c4c4c4"/><path d="M4 3v8h1V3zM12 3v8L6 7zM28 3v8l-6-4zM37 3v8l6-4zM53 3v8l6-4zM60 3v8h1V3z" fill="#858585"/></svg><span class="on m1">Model</span><span class="m2">3D Views</span><span class="m3">Motion Study 1</span></div>
  <footer class="status">
    <span class="s0">SOLIDWORKS Premium 2020 SP0.0</span><span class="s1">-22.71mm</span><span class="s2">-0.74mm</span><span class="s3">0mm</span><span class="s4">Fully Defined</span><span class="s5">Editing Sketch6 (Locked Focus)</span>
    <svg width="16" height="16"><use href="#light"/></svg><hr>
    <svg width="18" height="17" viewBox="0 0 24 24"><path d="M2 22v-8h20v8M6 14v8M10 14v8M14 14v8M18 14v8" fill="none" stroke="#4d9ac4" stroke-width="2"/><path d="M7 2l7 12H1z" fill="#ffcf24" stroke="#540"/><path d="M7 6v4" stroke="#222" stroke-width="1.500"/><path d="M13 13c7 0 8-4 7-10M16 6l4-4 3 4" fill="none" stroke="#111" stroke-width="2.500"/></svg>
    <span class="s8">Custom</span><i class="upt"></i>
    <svg class="s9" width="14" height="14" viewBox="0 0 14 14"><path d="M1 2l6 2 5-1 2 6-7 4-5-5z" fill="#ddd" stroke="#666"/><path d="M3 4l5 4 4-4" fill="none" stroke="#333"/></svg>
  </footer>
  <footer class="taskbar">
    <div class="apps">
      <div><svg width="18" height="18" viewBox="0 0 18 18"><path d="M0 2.500l7.500-1V8.500H0zM8.500 1.300L17 0v8.500H8.500zM0 9.500h7.500v7L0 15.500zM8.500 9.500H17V18l-8.500-1.300z" fill="#fff"/></svg></div>
      <div><svg width="18" height="18" viewBox="0 0 18 18"><circle cx="10" cy="6.500" r="5" fill="none" stroke="#fff" stroke-width="1.400"/><path d="M6.500 10.500L1 16.500" stroke="#fff" stroke-width="1.500"/></svg></div>
      <div><svg class="tk" viewBox="0 0 24 24"><circle cx="12" cy="12" r="11.500" fill="url(#gEdge)"/><path d="M.5 13C1 7 6 5 10 5c5 0 8 3 8 6 0 2-2 3-3 3H9c0 5 6 7 12 4-3 5-9 6-13 5C3 22 .5 17 .5 13z" fill="#1467b8" fill-opacity=".75"/><path d="M10 11c2-2 6 0 5 2.500-1 1 3 3 8.500 0-1 3-5 5-9 4.500-4-.5-6-4-4.500-7z" fill="#101010" fill-opacity=".75"/></svg></div>
      <div><svg class="tk" viewBox="0 0 24 24"><path d="M13 5h10v13H13z" fill="#e8f3fb"/><path d="M14 9l4 4 6-6" fill="none" stroke="#0f6fc0" stroke-width="2"/><path d="M1 3l13-2v22L1 21z" fill="#0a70c4"/><ellipse cx="7.500" cy="12" rx="2.600" ry="3.500" fill="none" stroke="#fff" stroke-width="1.800"/></svg></div>
      <div><svg class="tk" viewBox="0 0 24 24"><path d="M0 0h19l5 5v19H0z" fill="#f58a1f"/><path d="M19 0l5 5h-5z" fill="#6b3500"/><path d="M17 3C9 1 4 7 7 12c2 4 9 3 9-1h-5" fill="none" stroke="#fff" stroke-width="2.200"/><path d="M17 8c1 6-4 9-9 7" fill="none" stroke="#fff" stroke-width="1.300"/><text x="6.500" y="22.500" class="pdf">PDF</text></svg></div>
      <div class="run"><svg class="tk" viewBox="0 0 24 24"><path d="M1 3h9l2 2h11v16H1z" fill="#f2c14a"/><path d="M1 8h22v13H1z" fill="#fadb7c"/><path d="M5 21v-8h14v8h-4v-4H9v4z" fill="#4a9edb"/></svg></div>
      <div><svg class="tk" viewBox="0 0 24 24"><path d="M13 4h10v16H13z" fill="#f7ded7" stroke="#cf4525"/><circle cx="17.500" cy="9" r="3" fill="#d24726"/><path d="M15 15h6M15 17.500h6" stroke="#d24726"/><path d="M1 3l13-2v22L1 21z" fill="#cb4323"/><text x="4" y="16.500" class="ltr">P</text></svg></div>
      <div><svg class="tk" viewBox="0 0 24 24"><circle cx="12" cy="12" r="11" fill="#3aa757"/><path d="M12 12L2.500 6.500A11 11 0 0 1 22.500 8H12z" fill="#e53c30"/><path d="M12 8h10.500A11 11 0 0 1 12 23l4-8z" fill="#fbc016"/><circle cx="12" cy="12" r="5.500" fill="#fff"/><circle cx="12" cy="12" r="4.300" fill="#3b7de8"/></svg></div>
      <div><svg class="tk" viewBox="0 0 24 24"><path d="M13 4h10v16H13z" fill="#fff"/><path d="M14 6h8M14 9h8M14 12h8M14 15h8M14 18h8M18 4v16" stroke="#217346" stroke-width="1.300"/><path d="M1 3l13-2v22L1 21z" fill="#1f7244"/><text x="4" y="16.500" class="ltr">X</text></svg></div>
      <div class="run"><svg class="tk" viewBox="0 0 24 24"><path d="M0 0h24v24H0z" fill="#f3e3e3"/><path d="M3 21L9 2h6l6 19h-5l-1.500-5h-5L8 21zM10.500 12h3L12 6z" fill="#b8232f"/><path d="M3 21L9 2h3L8 21z" fill="#8e1a25"/></svg></div>
      <div class="run act"><svg class="tk" viewBox="0 0 24 24"><path d="M1 4l10-3 12 3v15l-9 4-13-4z" fill="#c4161c"/><path d="M1 4l10-3 12 3-10 3z" fill="#ef4a45"/><text x="1" y="15" class="sw">SW</text><text x="5" y="23.500" class="yr">2020</text></svg></div>
      <div class="run"><svg class="tk" viewBox="0 0 24 24"><path d="M2 12C3 5 12 3 18 7c4 3 4 8 1 11-3 4-6 1-8 3-2 2-9 1-9-9z" fill="#cfe4f2" stroke="#89a"/><circle cx="6.500" cy="13" r="2" fill="#dd3d2a"/><circle cx="10" cy="9" r="1.700" fill="#4ca64c"/><circle cx="15" cy="9.500" r="1.700" fill="#3a6fd0"/><circle cx="8" cy="18" r="1.700" fill="#f1b820"/><path d="M21 2l-7 20" stroke="#c98a4a" stroke-width="2"/><path d="M19 1l4 1-1 5-4-1z" fill="#e6b877"/></svg></div>
      <div class="run"><svg class="tk" viewBox="0 0 24 24"><path d="M13 4h10v16H13z" fill="#fff"/><path d="M14 7h8M14 10h8M14 13h8M14 16h8" stroke="#2b579a" stroke-width="1.300"/><path d="M1 3l13-2v22L1 21z" fill="#2b579a"/><text x="2" y="16" class="ltr w">W</text></svg></div>
      <div class="run"><svg class="tk" viewBox="0 0 24 24"><path d="M8 2l14 1v18l-2 2L1 17z" fill="#e9eeee"/><path d="M8 3l12 1-5 16-13-4z" fill="#62b6c9"/><path d="M8 3l4 .5L8 18l-6-2z" fill="#358a9c"/><path d="M20 4l1 18-6-2z" fill="#f5f8f8"/></svg></div>
    </div>
    <div class="tray">
      <svg width="14" height="10" viewBox="0 0 14 10"><path d="M2 8l5-5 5 5" fill="none" stroke="#eee" stroke-width="1.500"/></svg>
      <svg width="18" height="18" viewBox="0 0 18 18"><path d="M2 5l2 2.500h4L7 1.500h2l3 6h3q2 1.500 0 3h-3l-3 6H7l1-6H4L2 13v-3l-.8-1L2 8z" fill="none" stroke="#eee" stroke-width="1.300"/></svg>
      <svg width="18" height="16" viewBox="0 0 18 16"><path d="M1 5.500h2.500L7 2v12l-3.500-3.500H1zM9.500 5q2 3 0 6M12 3.500q3 4.500 0 9M14.500 2q4 6 0 12" fill="none" stroke="#eee" stroke-width="1.100"/></svg>
      <div class="clock"><span>2:48 PM</span><span>9/26/2022</span></div>
      <svg class="note" width="26" height="26" viewBox="0 0 26 26"><path d="M1 2h17v14h-4v4l-4-4H1z" fill="#fff"/><path d="M4 6h11M4 9h11M4 12h8" stroke="#111" stroke-width="1.300"/><circle cx="16" cy="17" r="8" fill="#333" stroke="#aaa"/><text x="13.500" y="21.500">1</text></svg>
    </div>
  </footer>
</div>
</body>
</html>
```
FILE: styles.css
```css
*{box-sizing:border-box}
html,body{margin:0;height:100%;overflow:hidden}
body{background:#484848;color:#f0f0f0;font:12px/13px "Open Sans","Noto Sans",sans-serif;letter-spacing:-.25px}
i,em{font-style:normal}
svg{display:block;flex:none}
.defs{position:absolute;width:0;height:0}
.app{width:1920px;height:1080px;display:flex;flex-direction:column}
.i20{width:20px;height:20px}
.i18{width:18px;height:18px}
.dd{display:block;flex:none;width:0;height:0;border:4px solid transparent;border-top-color:#eee;border-bottom:0}
.dd.dark{border-width:3.500px;border-bottom:0;border-top-color:#222}
.dd.g{border-top-color:#999}
.halo{filter:drop-shadow(0 0 .6px #ddd) drop-shadow(0 0 .6px #ccc)}

/* title bar */
.titlebar{height:31px;border-bottom:1px solid #858585;display:flex;align-items:center;flex:none}
.logo{width:145px;height:34px;margin-left:10px;align-self:flex-start;background:linear-gradient(160deg,#fff 40%,#d9d9d9);border:1px solid #bbb;border-top:0;display:flex;align-items:center;padding-left:4px;z-index:2;flex:none}
.brand{font:17px/24px Lato,sans-serif;color:#d3281c;font-style:italic;letter-spacing:-.6px;margin-top:6px;white-space:nowrap}
.brand b{font-weight:900}
.menu{display:grid;grid-template-columns:34px 35px 41px 44.500px 43px 60px 50px;margin-left:28px}
.pin{margin-left:-1px}
.quick{display:flex;align-items:center;border-left:2px solid #333;height:28px;margin-left:7px;padding-left:15px}
.quick svg,.quick .dd{margin-right:6px}
.doc-title{width:420px;padding-left:294px;color:#ccc;white-space:nowrap;flex:none}
.search{margin-left:auto;width:203px;height:24px;margin-top:1px;background:#ececf1;border:2px solid #181818;color:#555;display:flex;align-items:center;gap:4px;padding-left:6px}
.search span{width:133px;white-space:nowrap;letter-spacing:-.62px}
.win{display:flex;align-items:center;width:147px;padding-left:9px;gap:11px}
.win .dd{margin:0 -2px}

/* command ribbon */
.ribbon{height:87px;border-bottom:1px solid #858585;display:flex;padding:6px 0 2px 6px;flex:none}
.cmd{text-align:center;padding-top:4px;white-space:nowrap;flex:none;display:flex;flex-direction:column;align-items:center;gap:3px;height:78px}
.cmd.low{padding-top:12px;gap:1px}
.ri{width:21px;height:21px}
.cmd.low .ri{width:20px;height:20px}
.cmd .bottom{margin-top:auto;margin-bottom:9px}
.pressed{background:#2b2b2b;border:1px solid #101010}
.exit{background:linear-gradient(#2b2b2b 57px,#101010 57px,#101010 58px,#3c3c3c 58px);padding-top:3px}
.exit .bottom{margin-bottom:8px}
.disabled{color:#7d7d7d}
.disabled .dd{border-top-color:#888}
.rule{width:1px;background:#808080;height:78px;flex:none}
.exit{width:44px}.smart{width:64px;margin-right:1px}.trim{width:50px}.conv{width:49px}.off{width:49px}.surf{width:47px}
.disp{width:87px}.rep{width:42px}.snap{width:43px}.rapid{width:46px}.inst{width:60px}.shade{width:57px}
.sketchgrid{width:148px;margin-left:-1px;margin-right:1px;display:grid;grid-template-columns:29px 11px 29px 11px 29px 11px 28px;grid-template-rows:26px 26px 26px;align-items:center;justify-items:center}
.gi{width:20px;height:20px}
.faint{opacity:.55}
.stack{width:175px;display:flex;flex-direction:column;flex:none}
.row{height:26px;display:flex;align-items:center;gap:7px;padding-left:2px}
.row em{margin-left:auto;height:100%;width:14px;display:flex;align-items:center;justify-content:center}
.row.sel{background:#2b2b2b;border:1px solid #101010;padding-left:1px}
.row.sel em{border-left:1px solid #101010;background:#3b3b3b}

/* command tabs */
.tabrow{height:22px;background:#fff;display:flex;justify-content:space-between;flex:none}
.tabs{display:flex}
.tabs span{background:#333;border-right:1px solid #858585;border-bottom:1px solid #858585;height:22px;text-align:center;line-height:21px;white-space:nowrap}
.tabs .on{background:#484848;font-weight:700;border-bottom-color:#484848}
.t1{width:60px}.t2{width:56px}.t3{width:60px}.t4{width:78px}.t5{width:76px}.t6{width:87px}.t7{width:57px}.t8{width:60px}.t9{width:107px}.t10{width:133px}.t11{width:56px}.t12{width:121px}.t13{width:145px}
.docbtns{margin:7px 12px 0 0}

.work{flex:1;display:flex;min-height:0}

/* vertical feature toolbar */
.sidetools{width:47px;padding-top:2px;flex:none}
.grip{height:3px;margin:0 2px 8px 3px;background:repeating-linear-gradient(90deg,#aaa 0 2px,transparent 2px 4px)}
.tool{height:26px;display:flex;align-items:center;padding-left:6px;gap:8px}
.tool svg{width:20px;height:20px;fill:none;stroke:#6a6a6a;stroke-width:2}
.tool .dd{border-width:3px;border-bottom:0;border-top-color:#8a8a8a}
.tool.col svg{stroke-width:1}
.tool.col .dd{border-top-color:#eee}
.tool.active{width:27px;margin-left:3px;padding-left:2px;background:#2b2b2b;border:2px solid #0c0c0c}
.sidetools hr{margin:2px 2px 3.500px 5px;height:2px;border:0;border-top:1px solid #222;border-bottom:1px solid #8a8a8a}
.sidetools .full{margin:6px 2px 0 0;border-top:0}
.sidetools .h2{margin-bottom:5px}

/* property manager */
.pm{width:243px;border-right:1px solid #8a8a8a;flex:none;display:flex;flex-direction:column}
.pm-top{height:19px;width:240px;border-top:1px solid #8aa;border-bottom:1px solid #8a8a8a;display:flex;justify-content:center;align-items:center;background:linear-gradient(transparent 3px,#8a8a8a 3px,#8a8a8a 4px,transparent 4px)}
.dot{display:block;width:8px;height:8px;border-radius:50%;background:#ddd;border:2px solid #999}
.pm-top .dot{margin-top:5px}
.pm-tabs{margin:4px 0 0 2px;height:27px;width:239px;display:flex;border-top:1px solid #8a8a8a}
.pm-tabs>div{width:40px;background:#303030;border-right:1px solid #999;border-bottom:1px solid #999;display:flex;align-items:center;justify-content:center;flex:none}
.pm-tabs>.on{background:#484848;border-bottom:0}
.pm-tabs>.scroll{width:39px;margin-top:5px;border:1px solid #777;background:linear-gradient(90deg,#f3f3f3 19px,#777 19px,#777 20px,#f3f3f3 20px);justify-content:space-around;padding-left:1px}
.lt,.rt{border:4px solid transparent;border-right-color:#111;border-left:0}
.rt{border-left:4px solid #111;border-right:0}
.pm-title{display:flex;align-items:center;margin:5px 0 0 9px;height:22px;width:218px}
.pm-title strong{font-size:13px;margin-left:5px;letter-spacing:-.3px}
.help{margin-left:auto;width:13px;height:13px;border-radius:50%;background:#fff;color:#17628c;font-size:11px;text-align:center}
.pm-ok{display:flex;gap:11px;margin:8px 0 0 6px;height:15px}
.grp{margin:13px 6px 0 5px;border-top:1px solid #aaa;padding-left:4px}
.grp h3{font-size:12px;line-height:16px;margin:7px 2px 0 0;display:flex;justify-content:space-between;align-items:center;letter-spacing:-.15px}
.f{display:flex;height:24px;width:216px}
.lb{width:24px;margin-right:6px;display:flex;align-items:center;justify-content:center}
.boxed{border:1px solid #1b1b1b;background:#3a3a3a}
.in{flex:1;background:#fff;border:1px solid #8b8b8b;color:#333c4a;line-height:19px;padding-left:5px}
.hot{background:#cde4f9;border:2px solid #5eaee6;line-height:16px;padding-left:4px;color:#222}
.sp{width:19px;margin-left:1px;display:flex;flex-direction:column;gap:1px;height:22px}
.sp i{flex:1;background:#eee;display:flex;justify-content:center;align-items:center}
.sp i::before{content:"";width:5px;height:5px;border:solid #444;border-width:1.500px 0 0 1.500px;transform:translateY(2px) rotate(45deg)}
.sp i+i::before{transform:translateY(-1px) rotate(225deg)}
.f1{margin-top:5px}.f2{margin-top:5px}.f3{margin-top:5px}.f4{margin-top:9px}
.ck{display:flex;align-items:center;gap:3px;height:13px;margin-left:30px;white-space:nowrap;letter-spacing:-.05px}
.ck i{width:13px;height:13px;background:#fff;border:1px solid #333}
.ck .y::before{content:"";display:block;width:9px;height:5px;border:solid #333;border-width:0 0 1.500px 1.500px;transform:translate(1px,1px) rotate(-48deg)}
.c1{margin-top:9px}.c2{margin-top:11px}.c3{margin-top:11px}
.f5{margin-top:10px}.c4{margin-top:11px;margin-left:29px}.f6{margin-top:10px}.f7{margin-top:6px}
.mini{font:bold 10px "Liberation Sans",sans-serif;fill:#eee;stroke:#222;stroke-width:.4px;letter-spacing:0}
.g2{margin-top:10px}
.g2 h3{margin-top:6px}
.f8{margin-top:5px;height:33px}
.f8 .lb{align-items:flex-start}
.d2{margin:-1px 0 0 119px}
.g3{margin-top:10px}
.pm-end{margin-top:auto;width:240px;height:4px;border-top:1px solid #8a8a8a;border-bottom:1px solid #8a8a8a;margin-bottom:1px}

/* graphics area */
.view{flex:1;position:relative;background:#fff}
.scene{font-family:Lato,sans-serif;letter-spacing:0}
.plane{font-size:21px;font-weight:700;fill:#30d030;stroke:#30d030;stroke-width:.4}
.dim{font-size:33px;font-weight:400;fill:#000;stroke:#000;stroke-width:1.4}
.dim.sel{fill:#4fa0f2;stroke:#4fa0f2;stroke-width:1}
.triad text{font:14px "Open Sans",sans-serif}
.orient{font:bold 14px "Open Sans",sans-serif;fill:#111}
.hud{position:absolute;left:637px;top:5px;display:flex;align-items:center;gap:6px}
.hud .dd{margin:0 3px 0 -.5px;border-width:3.500px;border-bottom:0}
.tree{position:absolute;left:5px;top:5px;height:20px;display:flex;align-items:center;color:#222;white-space:nowrap}
.tree i{border:4px solid transparent;border-left:5px solid #111;border-right:0;margin-right:11px}
.tree span{margin-left:2px}
.confirm{position:absolute;left:1525px;top:32px}
.tip{position:absolute;left:651px;top:492px;width:83px;height:20px;background:#fff;border:1px solid #777;box-shadow:2px 2px 2px #0006;color:#606060;text-align:center;line-height:18px;letter-spacing:-.1px}
.callout{position:absolute;left:739px;top:470px;width:134px;height:76px;border:1px solid #111;background:#f5f5f5;color:#111;display:grid;grid-template:24px 50px/59px 73px;outline:1px solid #fff;letter-spacing:-.35px}
.callout>b{position:absolute;left:63px;top:-5px;width:7px;height:7px;border:1px solid #111;border-radius:50%;background:#fff}
.callout h4{grid-column:1/3;margin:0;text-align:center;font-size:12px;font-weight:400;line-height:25px;letter-spacing:0}
.cl,.cr{display:flex;flex-direction:column;line-height:25px;padding-left:6px}
.cl{letter-spacing:-.45px}
.cr{background:#fff;border:solid #111;border-width:1px 0 0 1px;padding-left:3px;line-height:24.500px}
.handle{position:absolute;left:-1px;top:402px;width:9px;height:39px;background:#484848;display:flex;align-items:center}
.handle .dot{margin-left:-1px}
.taskpane{position:absolute;right:0;top:54px;width:26px;border:1px solid #777;border-right:0}
.taskpane>div{height:24px;background:#303030;border-bottom:1px solid #8a8a8a;padding:1px 0 0 2px}
.taskpane>div:last-child{border-bottom:0}
.taskpane>.on{background:#bcbcbc}

/* bottom bars */
.modelrow{height:16px;border-top:1px solid #8a8a8a;border-bottom:1px solid #8a8a8a;display:flex;padding-left:47px;line-height:12px;flex:none}
.grey{width:27px;background:#b0b0b0}
.modelrow span{text-align:center;border-right:1px solid #8a8a8a;background:#303030;white-space:nowrap}
.modelrow .on{background:#484848;font-weight:700}
.m1{width:57px;padding-left:3px}.m2{width:68px}.m3{width:108px;padding-right:8px}
.status{height:18px;display:flex;align-items:center;flex:none;white-space:nowrap}
.status hr{width:1px;height:14px;border:0;background:#ccc;margin:0 5px 0 2px}
.s0{width:1240px;padding-left:1px;letter-spacing:-.4px}.s1{width:78px}.s2{width:63px}.s3{width:48px}.s4{width:87px}.s5{width:184px}
.s8{width:58px;margin-left:69px}
.upt{border:3px solid transparent;border-bottom-color:#eee;border-top:0}
.s9{margin-left:27px}
.taskbar{height:40px;background:#101010;display:flex;justify-content:space-between;flex:none}
.apps{display:flex}
.apps>div{width:49px;display:flex;align-items:center;justify-content:center}
.tk{width:24px;height:24px}
.apps .run{background:linear-gradient(#76b9ed,#76b9ed) 4px 38px/40px 2px no-repeat}
.apps .act{background:linear-gradient(#76b9ed,#76b9ed) 0 38px/49px 2px no-repeat,#353535}
.ltr{font:bold 12px "Open Sans",sans-serif;fill:#fff}
.ltr.w{font-size:10px}
.pdf{font:bold 6px "Liberation Sans",sans-serif;fill:#fff}
.sw{font:bold 13px "Liberation Serif",serif;fill:#fff}
.yr{font:bold 8.500px "Liberation Sans",sans-serif;fill:#fff;stroke:#000;stroke-width:1.500px;paint-order:stroke}
.tray{display:flex;align-items:center;padding-right:17px;gap:8px;color:#fff}
.clock{width:58px;display:flex;flex-direction:column;gap:5px;text-align:center;margin-top:-2px}
.note text{font:bold 13px "Open Sans",sans-serif;fill:#fff}
```
